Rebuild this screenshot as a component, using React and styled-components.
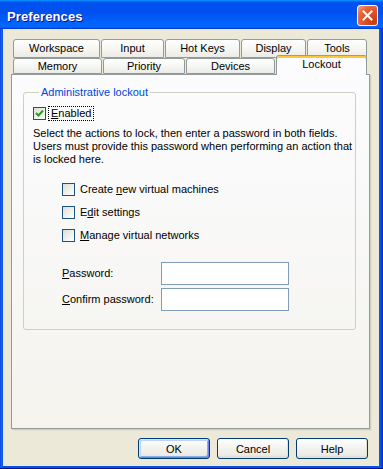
import React from "react";
import styled, { createGlobalStyle } from "styled-components";

const GlobalStyle = createGlobalStyle`
  html, body { margin: 0; padding: 0; background: #ffffff; }
  body { font-family: "Liberation Sans", Arial, sans-serif; font-size: 11px; color: #000; }
`;

const Window = styled.div`
  width: 383px;
  height: 469px;
  box-sizing: border-box;
  display: flex;
  flex-direction: column;
  background: linear-gradient(90deg, #0831d9 0, #166aee 1px, #0855dd 3px, #0855dd 379px, #0a5ff2 380px, #0831d9 382px);
  padding: 0 4px 3px 3px;
  box-shadow: inset 0 -1px 0 #00138c;
`;

const TitleBar = styled.div`
  height: 29px;
  margin: 0 -4px 0 -3px;
  box-sizing: border-box;
  display: flex;
  align-items: center;
  justify-content: space-between;
  padding: 2px 5px 0 7px;
  background: linear-gradient(180deg, #0997ff, #0053ee 8%, #0050ee 40%, #06f 88%, #06f 93%, #005bff 95%, #003dd7 96%, #003dd7);
`;

const Title = styled.span`
  font-family: "Liberation Sans", Arial, sans-serif;
  font-weight: bold;
  font-size: 13px;
  color: #fff;
  text-shadow: 1px 1px 0 #0f1089;
  letter-spacing: 0.1px;
  margin-top: 2px;
`;

const CloseButton = styled.div`
  width: 21px;
  height: 21px;
  box-sizing: border-box;
  border: 1px solid #fff;
  border-radius: 3px;
  background: radial-gradient(circle at 85% 85%, #c43b12 0%, #e0512a 45%, #e6683f 70%, #f3a68a 100%);
  display: flex;
  align-items: center;
  justify-content: center;
`;

const Body = styled.div`
  flex: 1;
  background: #ece9d8;
  display: flex;
  flex-direction: column;
  padding: 10px 9px 7px 8px;
`;

const TabStrip = styled.div`
  display: flex;
  flex-direction: column;
  margin-left: 2px;
`;

const TabRow = styled.div`
  display: flex;
  align-items: flex-end;
  gap: 1px;
  height: ${(p) => p.$h}px;
`;

const Tab = styled.div`
  position: relative;
  width: ${(p) => p.$w}px;
  height: ${(p) => (p.$active ? 20 : p.$h)}px;
  margin-bottom: ${(p) => (p.$active ? -1 : 0)}px;
  box-sizing: border-box;
  border: 1px solid #919b9c;
  border-bottom: ${(p) => (p.$active ? "none" : "1px solid #919b9c")};
  border-top: 1px solid ${(p) => (p.$active ? "#e68b2c" : "#919b9c")};
  border-radius: 3px 3px 0 0;
  background: ${(p) =>
    p.$active
      ? "#fcfcfe"
      : "linear-gradient(180deg, #ffffff 0%, #f7f7f4 45%, #ecebe6 100%)"};
  box-shadow: ${(p) => (p.$active ? "inset 0 2px 0 #ffc83c" : "none")};
  z-index: ${(p) => (p.$active ? 2 : 0)};
  display: flex;
  align-items: ${(p) => (p.$active ? "flex-start" : "center")};
  padding-top: ${(p) => (p.$active ? 2 : 0)}px;
  justify-content: center;
  font-size: 11px;
  line-height: 13px;
  color: #000;
  white-space: nowrap;
`;

const Panel = styled.div`
  position: relative;
  z-index: 1;
  width: 359px;
  height: 355px;
  box-sizing: border-box;
  border: 1px solid #919b9c;
  background: linear-gradient(180deg, #fcfcfe 0%, #f4f3ee 100%);
  box-shadow: 1px 1px 0 #d0cebf, 2px 2px 0 #e3e0d0;
  padding: 11px 13px 0 11px;
`;

const GroupBox = styled.fieldset`
  margin: 0;
  min-width: 0;
  border: 1px solid #d0d0bf;
  border-radius: 3px;
  padding: 7px 9px 18px 9px;
  display: flex;
  flex-direction: column;
`;

const Legend = styled.legend`
  color: #0046d5;
  font-size: 11px;
  line-height: 13px;
  padding: 0 2px;
  margin-left: 6px;
`;

const CheckRow = styled.label`
  display: flex;
  align-items: center;
  height: 15px;
`;

const Box = styled.span`
  width: 13px;
  height: 13px;
  box-sizing: border-box;
  border: 1px solid #1c5180;
  background: linear-gradient(135deg, #dcdcd7 0%, #f2f2ef 60%, #ffffff 100%);
  display: flex;
  align-items: center;
  justify-content: center;
  flex: none;
`;

const CheckText = styled.span`
  margin-left: 2px;
  padding: 0 2px;
  line-height: 13px;
  border: 1px ${(p) => (p.$focus ? "dotted #000" : "solid transparent")};
  white-space: nowrap;
`;

const Key = styled.span`
  text-decoration: underline;
`;

const Paragraph = styled.div`
  margin-top: 6px;
  line-height: 13px;
  white-space: nowrap;
  display: flex;
  flex-direction: column;
`;

const CheckList = styled.div`
  display: flex;
  flex-direction: column;
  gap: 8px;
  margin-top: 16px;
  padding-left: 29px;
`;

const Fields = styled.div`
  display: flex;
  flex-direction: column;
  gap: 3px;
  margin-top: 19px;
  padding-left: 29px;
`;

const FieldRow = styled.div`
  display: flex;
  align-items: center;
  height: 23px;
`;

const FieldLabel = styled.label`
  width: 99px;
  flex: none;
  line-height: 13px;
`;

const TextInput = styled.input`
  width: 128px;
  height: 23px;
  box-sizing: border-box;
  border: 1px solid #7f9db9;
  background: #fff;
  padding: 0 3px;
  font: inherit;
  outline: none;
`;

const ButtonBar = styled.div`
  display: flex;
  justify-content: flex-end;
  gap: 7px;
  margin-top: 9px;
  padding-right: 2px;
`;

const Button = styled.button`
  width: 72px;
  height: 21px;
  box-sizing: border-box;
  border: 1px solid #003c74;
  border-radius: 3px;
  background: linear-gradient(180deg, #ffffff 0%, #f4f4f0 40%, #ecebe6 85%, #d6d0c5 100%);
  box-shadow: ${(p) =>
    p.$default
      ? "inset 1px 1px 0 #cee7ff, inset -1px -1px 0 #6982ee, inset 2px 2px 0 #bcd4f6, inset -2px -2px 0 #89ade4"
      : "inset -1px -1px 0 #e3e0d6"};
  font-family: "Liberation Sans", Arial, sans-serif;
  font-size: 11px;
  color: #000;
  padding: 0;
`;

const Check = () => (
  <svg width="9" height="9" viewBox="0 0 9 9">
    <path d="M1 4 L3.5 6.5 L8 1.5" fill="none" stroke="#21a121" strokeWidth="2" />
  </svg>
);

const row1 = [
  ["Workspace", 87],
  ["Input", 63],
  ["Hot Keys", 75],
  ["Display", 65],
  ["Tools", 60],
];
const row2 = [
  ["Memory", 89],
  ["Priority", 82],
  ["Devices", 89],
  ["Lockout", 91, true],
];

export default function App() {
  return (
    <>
      <GlobalStyle />
      <Window>
        <TitleBar>
          <Title>Preferences</Title>
          <CloseButton>
            <svg width="11" height="11" viewBox="0 0 11 11">
              <path d="M1.5 1.5 L9.5 9.5 M9.5 1.5 L1.5 9.5" stroke="#fff" strokeWidth="2" strokeLinecap="square" />
            </svg>
          </CloseButton>
        </TitleBar>
        <Body>
          <TabStrip>
            <TabRow $h={19}>
              {row1.map(([t, w]) => (
                <Tab key={t} $w={w} $h={19}>{t}</Tab>
              ))}
            </TabRow>
            <TabRow $h={16}>
              {row2.map(([t, w, a]) => (
                <Tab key={t} $w={w} $h={16} $active={a}>{t}</Tab>
              ))}
            </TabRow>
          </TabStrip>
          <Panel>
            <GroupBox>
              <Legend>Administrative lockout</Legend>
              <CheckRow>
                <Box><Check /></Box>
                <CheckText $focus><Key>E</Key>nabled</CheckText>
              </CheckRow>
              <Paragraph>
                <span>Select the actions to lock, then enter a password in both fields.</span>
                <span>Users must provide this password when performing an action that</span>
                <span>is locked here.</span>
              </Paragraph>
              <CheckList>
                <CheckRow>
                  <Box />
                  <CheckText>Create <Key>n</Key>ew virtual machines</CheckText>
                </CheckRow>
                <CheckRow>
                  <Box />
                  <CheckText>E<Key>d</Key>it settings</CheckText>
                </CheckRow>
                <CheckRow>
                  <Box />
                  <CheckText><Key>M</Key>anage virtual networks</CheckText>
                </CheckRow>
              </CheckList>
              <Fields>
                <FieldRow>
                  <FieldLabel><Key>P</Key>assword:</FieldLabel>
                  <TextInput type="password" />
                </FieldRow>
                <FieldRow>
                  <FieldLabel><Key>C</Key>onfirm password:</FieldLabel>
                  <TextInput type="password" />
                </FieldRow>
              </Fields>
            </GroupBox>
          </Panel>
          <ButtonBar>
            <Button $default>OK</Button>
            <Button>Cancel</Button>
            <Button>Help</Button>
          </ButtonBar>
        </Body>
      </Window>
    </>
  );
}
